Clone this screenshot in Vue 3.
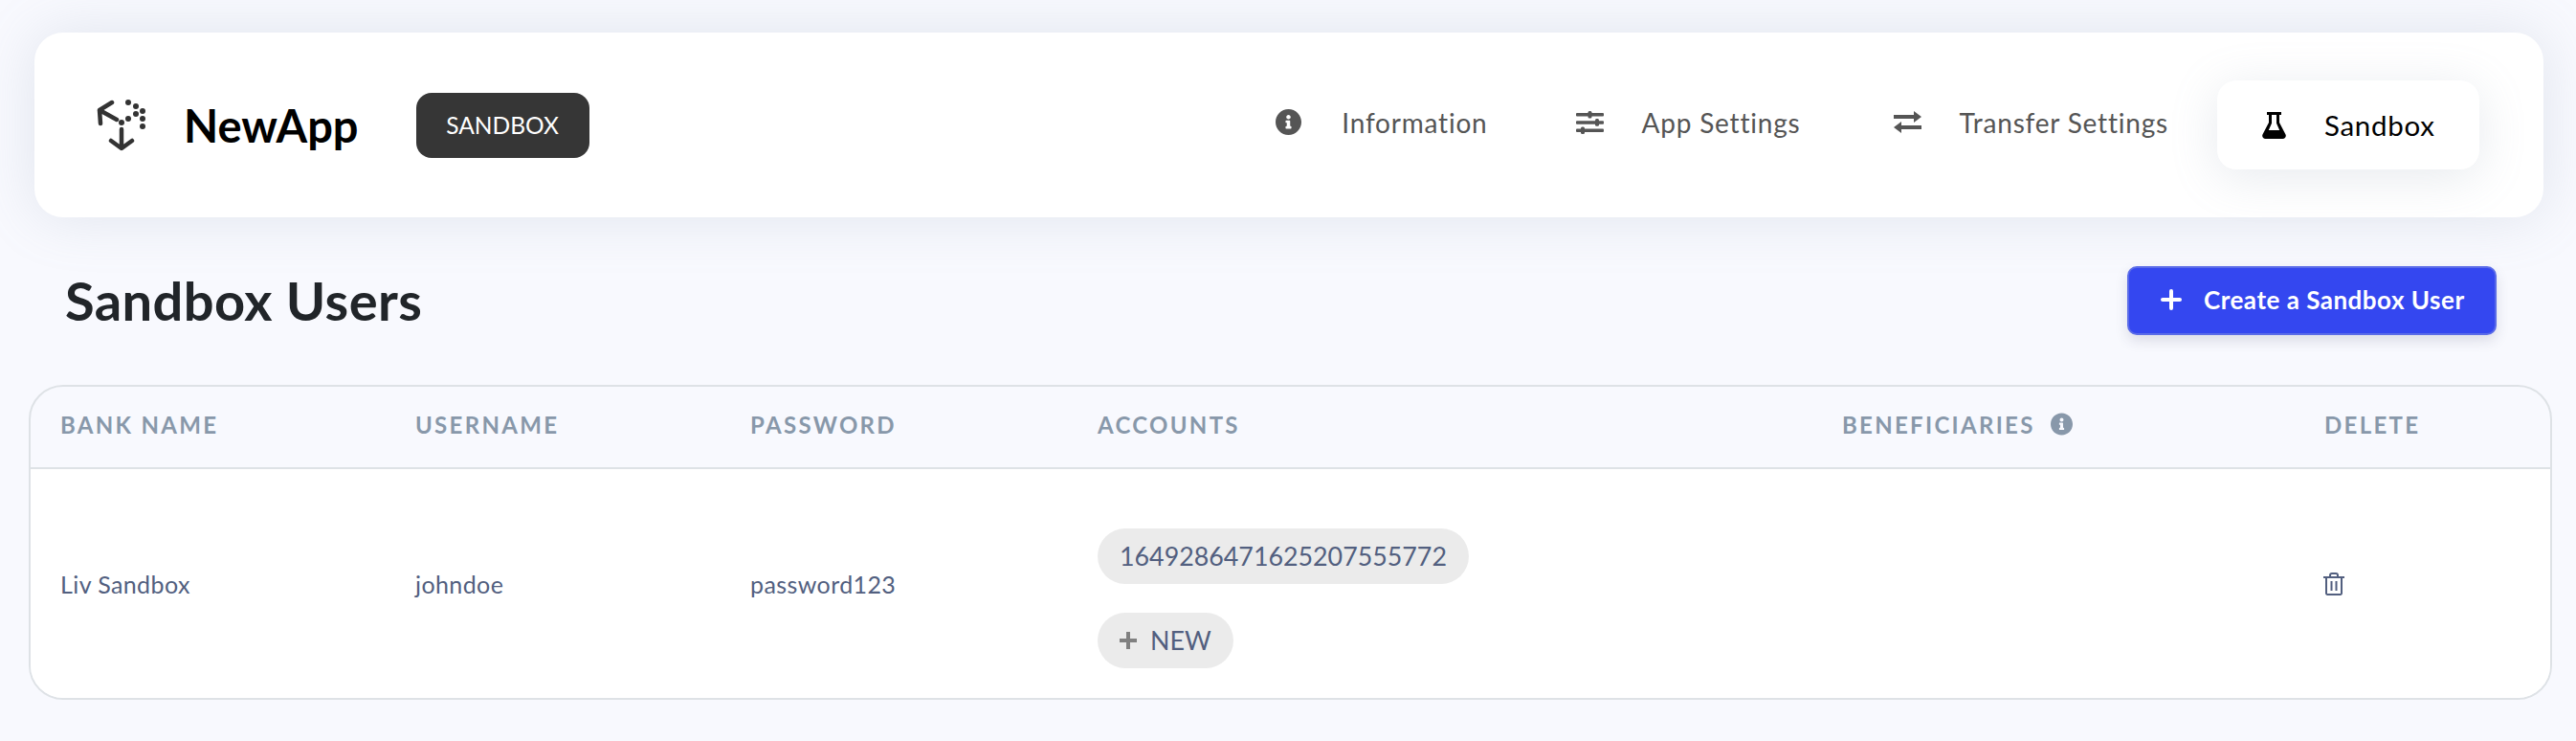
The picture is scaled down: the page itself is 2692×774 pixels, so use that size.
<script setup>
const navItems = [
  { label: 'Information', icon: 'info' },
  { label: 'App Settings', icon: 'sliders' },
  { label: 'Transfer Settings', icon: 'transfer' },
  { label: 'Sandbox', icon: 'flask', active: true }
]

const infoPath = 'M256 8C119.043 8 8 119.083 8 256c0 136.997 111.043 248 248 248s248-111.003 248-248C504 119.083 392.957 8 256 8zm0 110c23.196 0 42 18.804 42 42s-18.804 42-42 42-42-18.804-42-42 18.804-42 42-42zm56 254c0 6.627-5.373 12-12 12h-88c-6.627 0-12-5.373-12-12v-24c0-6.627 5.373-12 12-12h12v-64h-12c-6.627 0-12-5.373-12-12v-24c0-6.627 5.373-12 12-12h64c6.627 0 12 5.373 12 12v100h12c6.627 0 12 5.373 12 12v24z'
const logoDots = [
  [133, 107], [141, 111], [148, 116], [141, 119],
  [148, 124], [133, 124], [126, 128], [148, 132]
]
</script>

<template>
  <div class="page">
    <header class="topbar">
      <div class="brand">
        <svg class="logo" viewBox="100 102 52 57" fill="none">
          <path d="M116 107 103 115 104 129M103 115 121 125M115 147 126 155 137 147M126 135V153" stroke="#333" stroke-width="4.5" stroke-linejoin="round" stroke-linecap="round" />
          <circle v-for="d in logoDots" :key="d.join()" :cx="d[0]" :cy="d[1]" r="3" fill="#333" />
        </svg>
        <span class="brand-name">NewApp</span>
        <span class="env-badge">SANDBOX</span>
      </div>
      <nav class="nav">
        <a v-for="item in navItems" :key="item.label" class="nav-link" :class="{ active: item.active }">
          <span class="nav-icon">
            <svg v-if="item.icon === 'info'" width="27" height="27" viewBox="8 8 496 496"><path :d="infoPath" fill="currentColor" /></svg>
            <svg v-else-if="item.icon === 'sliders'" width="29" height="24" viewBox="0 0 29 24" fill="currentColor">
              <rect x="0" y="2" width="29" height="3.4" rx="1" /><rect x="12.5" y="0" width="4" height="7.4" rx="1.5" />
              <rect x="0" y="10.3" width="29" height="3.4" rx="1" /><rect x="20" y="8" width="4" height="7.8" rx="1.5" />
              <rect x="0" y="18.6" width="29" height="3.4" rx="1" /><rect x="5" y="16.4" width="4" height="7.6" rx="1.5" />
            </svg>
            <svg v-else-if="item.icon === 'transfer'" width="29" height="23" viewBox="0 0 29 23" fill="currentColor">
              <path d="M0 4h21V0l8 6-8 6V8H0zM29 15H8v-4l-8 6 8 6v-4h21z" />
            </svg>
            <svg v-else width="25" height="28" viewBox="0 0 25 28" fill="currentColor">
              <path d="M5 0h15v3h-2v8l6.400 12.200C25.600 25.500 24 28 21.500 28h-18C1 28-.6 25.500.6 23.200L7 11V3H5zM10 3v8.800L6.800 19h11.400L15 11.800V3z" />
            </svg>
          </span>
          <span>{{ item.label }}</span>
        </a>
      </nav>
    </header>

    <div class="title-row">
      <h1>Sandbox Users</h1>
      <button class="create-btn">
        <svg width="22" height="22" viewBox="0 0 22 22"><path d="M11 2v18M2 11h18" stroke="#fff" stroke-width="4" stroke-linecap="round" /></svg>
        <span>Create a Sandbox User</span>
      </button>
    </div>

    <div class="table-wrap">
      <table>
        <colgroup>
          <col style="width: 371px" /><col style="width: 350px" /><col style="width: 363px" />
          <col style="width: 778px" /><col style="width: 504px" /><col />
        </colgroup>
        <thead>
          <tr>
            <th>BANK NAME</th>
            <th>USERNAME</th>
            <th>PASSWORD</th>
            <th>ACCOUNTS</th>
            <th>
              <span class="th-info">BENEFICIARIES
                <svg width="23" height="24" viewBox="8 8 496 496"><path :d="infoPath" fill="currentColor" /></svg>
              </span>
            </th>
            <th>DELETE</th>
          </tr>
        </thead>
        <tbody>
          <tr>
            <td>Liv Sandbox</td>
            <td>johndoe</td>
            <td>password123</td>
            <td>
              <div class="chips">
                <span class="chip">1649286471625207555772</span>
                <span class="chip">
                  <svg class="chip-plus" width="18" height="18" viewBox="0 0 18 18"><path d="M9 0v18M0 9h18" stroke="#808080" stroke-width="4" /></svg>
                  NEW
                </span>
              </div>
            </td>
            <td></td>
            <td>
              <svg class="trash" width="22" height="24" viewBox="0 0 22 24" fill="none" stroke="#525f7f" stroke-width="2">
                <path d="M0 5h22M3 5v17a1.500 1.500 0 0 0 1.500 1h13a1.500 1.500 0 0 0 1.500-1V5M7 5V3a2 2 0 0 1 2-2h4a2 2 0 0 1 2 2v2M8.500 9v10M13.500 9v10" />
              </svg>
            </td>
          </tr>
        </tbody>
      </table>
    </div>
  </div>
</template>

<style>
html, body {
  background: #f8f9fe;
}
</style>

<style scoped>
.page {
  height: 774px;
  box-sizing: border-box;
  padding-top: 34px;
  overflow: hidden;
  font-family: Lato, "Open Sans", sans-serif;
  background: #f8f9fe;
}

.topbar {
  display: flex;
  align-items: center;
  justify-content: space-between;
  height: 193px;
  margin: 0 34px 0 36px;
  padding: 0 67px 0 65px;
  background: #fff;
  border-radius: 30px;
  box-shadow: 0 0 60px rgba(136, 152, 170, 0.2);
}

.brand {
  display: flex;
  align-items: center;
}

.logo {
  width: 52px;
  height: 57px;
  margin-right: 39px;
}

.brand-name {
  margin-right: 60px;
  font-size: 47px;
  font-weight: 700;
  color: #000;
}

.env-badge {
  display: flex;
  align-items: center;
  justify-content: center;
  width: 181px;
  height: 68px;
  background: #363636;
  border-radius: 16px;
  color: #fff;
  font-size: 24.5px;
}

.nav {
  display: flex;
  align-items: center;
}

.nav-link {
  display: flex;
  align-items: center;
  margin-left: 97px;
  padding-bottom: 6px;
  font-size: 28px;
  letter-spacing: 0.8px;
  color: #555;
}

.nav-link:nth-child(2) {
  margin-left: 92px;
}

.nav-icon {
  display: flex;
  width: 69px;
}

.nav-link.active {
  width: 274px;
  height: 93px;
  box-sizing: border-box;
  margin-left: 51px;
  padding: 0 0 0 47px;
  background: #fff;
  border-radius: 20px;
  box-shadow: 0 8px 50px rgba(136, 152, 170, 0.2);
  font-size: 29.5px;
  letter-spacing: 0.7px;
  color: #000;
}

.nav-link.active .nav-icon {
  width: 65px;
}

.title-row {
  display: flex;
  align-items: center;
  justify-content: space-between;
  margin: 51px 83px 52px 68px;
}

h1 {
  margin: 0;
  padding-bottom: 2px;
  font-size: 56px;
  font-weight: 700;
  letter-spacing: 0.4px;
  color: #212529;
}

.create-btn {
  display: flex;
  align-items: center;
  gap: 23px;
  width: 386px;
  height: 72px;
  padding: 0 0 2px 33px;
  background: #3447f0;
  border: 2px solid #5a6be8;
  border-radius: 10px;
  box-shadow: 0 6px 14px rgba(50, 50, 93, 0.14);
  color: #fff;
  font-family: inherit;
  font-size: 26px;
  font-weight: 700;
  letter-spacing: 0.5px;
}

.table-wrap {
  margin: 0 25px 0 30px;
  height: 329px;
  box-sizing: border-box;
  border: 2px solid #dee2e6;
  border-radius: 36px;
  overflow: hidden;
}

table {
  width: 100%;
  height: 100%;
  table-layout: fixed;
  border-collapse: collapse;
}

th {
  height: 78px;
  padding: 0 0 6px 31px;
  border-bottom: 2px solid #dee2e6;
  text-align: left;
  font-size: 24px;
  font-weight: 700;
  letter-spacing: 2.3px;
  color: #8898aa;
}

.th-info {
  display: flex;
  align-items: center;
  gap: 16px;
}

td {
  padding: 0 0 0 31px;
  background: #fff;
  font-size: 25px;
  letter-spacing: 0.4px;
  color: #525f7f;
}

.chips {
  display: flex;
  flex-direction: column;
  align-items: flex-start;
  gap: 30px;
  padding-top: 30px;
}

.chip {
  display: flex;
  align-items: center;
  height: 58px;
  padding: 0 23px;
  background: #ebebeb;
  border-radius: 29px;
  font-size: 26.8px;
  letter-spacing: 0;
  white-space: nowrap;
}

.chip-plus {
  margin-right: 14px;
}

.trash {
  display: block;
  margin-left: -1px;
}
</style>
